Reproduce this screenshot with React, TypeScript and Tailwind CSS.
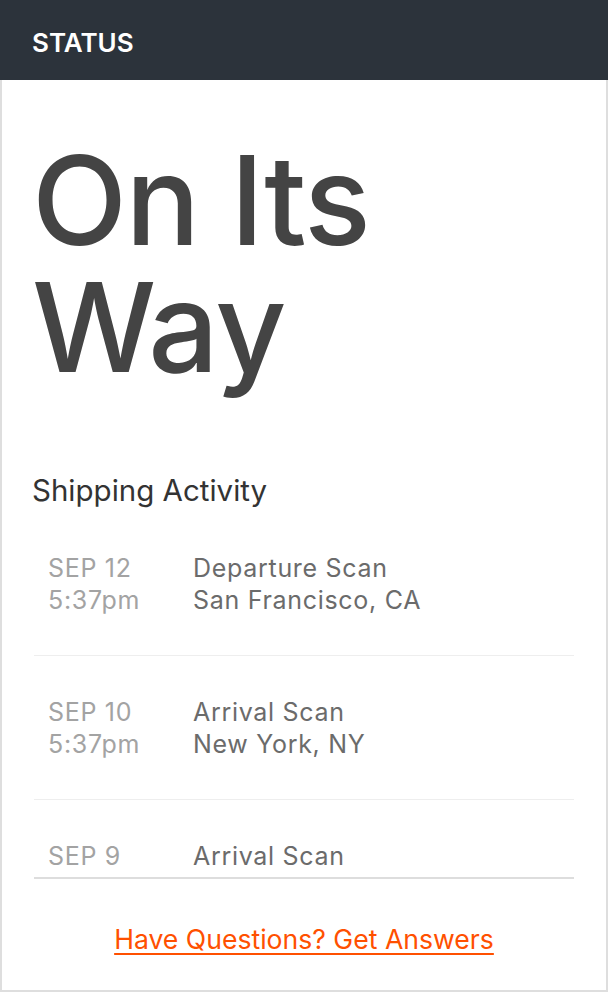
import React from 'react';

const activity = [
  { date: 'SEP 12', time: '5:37pm', title: 'Departure Scan', place: 'San Francisco, CA' },
  { date: 'SEP 10', time: '5:37pm', title: 'Arrival Scan', place: 'New York, NY' },
  { date: 'SEP 9', time: '5:37pm', title: 'Arrival Scan', place: 'Boston, MA' },
];

export default function App() {
  return (
    <div className="flex h-[992px] w-full flex-col bg-white font-['Inter',sans-serif]">
      {/* Barra superior */}
      <div className="flex h-20 shrink-0 items-center bg-[#2c333b] px-8 pt-1">
        <span className="text-[26px] font-semibold text-white">STATUS</span>
      </div>

      <div className="flex flex-1 flex-col border-x-2 border-b-2 border-[#dedede] px-[30px]">
        <h1 className="mt-[57px] text-[124px] leading-[127px] font-medium tracking-[-1.5px] text-[#444]">
          On Its
          <br />
          Way
        </h1>

        <h2 className="mt-[83px] text-[29.5px] leading-8 text-[#333]">Shipping Activity</h2>

        {/* Lista con scroll */}
        <div className="mx-[2px] mt-[6px] h-[367px] overflow-hidden border-b-2 border-[#ddd]">
          {activity.map((a) => (
            <div key={a.date} className="flex border-b border-[#eee] pt-10 pb-[39px] pl-[14px] text-[25px] leading-8 tracking-[0.7px]">
              <div className="w-[145px] text-[#a3a3a3]">
                <p>{a.date}</p>
                <p>{a.time}</p>
              </div>
              <div className="text-[#6b6b6b]">
                <p>{a.title}</p>
                <p>{a.place}</p>
              </div>
            </div>
          ))}
        </div>

        <div className="mt-[41px] text-center">
          <a href="#" className="text-[26.6px] text-[#ff5000] underline decoration-2 underline-offset-4">
            Have Questions? Get Answers
          </a>
        </div>
      </div>
    </div>
  );
}
